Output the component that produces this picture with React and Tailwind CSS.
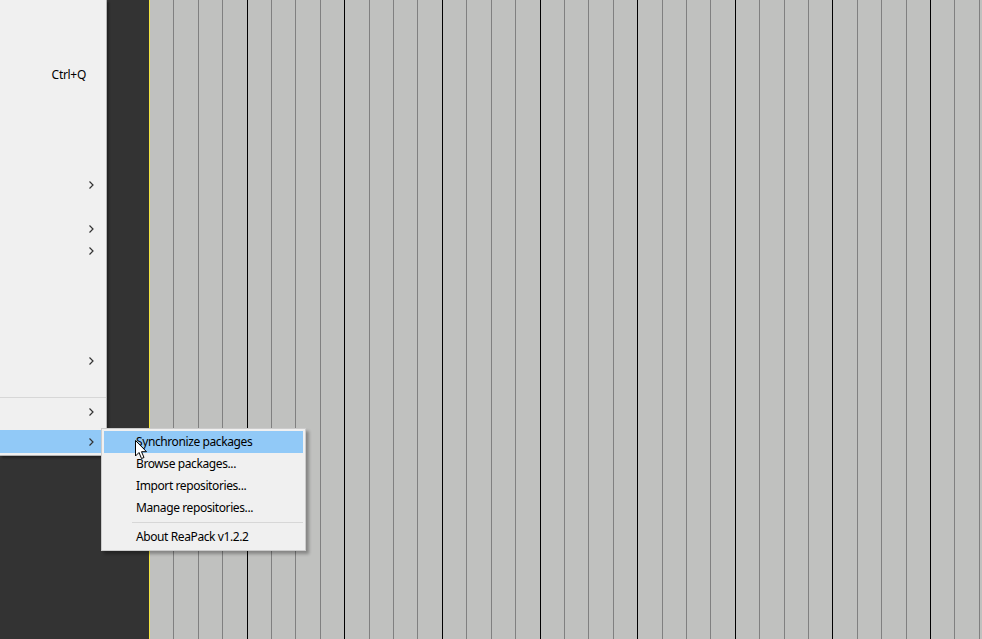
const font = { fontFamily: '"Noto Sans", "Segoe UI", sans-serif' };

function Chevron() {
  return (
    <svg width="5" height="8" viewBox="0 0 5 8" className="text-[#333]">
      <path d="M0.5 0.5 L4 4 L0.5 7.5" fill="none" stroke="currentColor" strokeWidth="1.2" />
    </svg>
  );
}

function MenuRow({ arrow, label, highlight, h = "h-[22px]" }) {
  return (
    <div
      className={`${h} flex items-center justify-end pr-[12px] ${
        highlight ? "bg-[#91c9f7]" : ""
      }`}
    >
      {label ? (
        <span className="text-[12px] tracking-[-0.3px] text-black pr-[8px]">{label}</span>
      ) : null}
      {arrow ? <Chevron /> : null}
    </div>
  );
}

function Separator({ h = "h-[7px]" }) {
  return (
    <div className={`${h} flex items-center`}>
      <div className="h-px w-full bg-[#d7d7d7]" />
    </div>
  );
}

function MainMenu() {
  return (
    <div
      className="absolute left-0 top-0 w-[107px] bg-[#f0f0f0] border-r border-b border-[#b4b4b4] shadow-[2px_2px_2px_rgba(0,0,0,0.35)]"
      style={font}
    >
      <div className="h-[64px]" />
      <MenuRow label="Ctrl+Q" />
      <div className="h-[88px]" />
      <MenuRow arrow />
      <div className="h-[22px]" />
      <MenuRow arrow />
      <MenuRow arrow />
      <div className="h-[88px]" />
      <MenuRow arrow />
      <div className="h-[22px]" />
      <Separator />
      <MenuRow arrow />
      <div className="h-[7px]" />
      <MenuRow arrow highlight h="h-[23px]" />
      <div className="h-[2px]" />
    </div>
  );
}

function SubItem({ children, highlight }) {
  return (
    <div
      className={`h-[22px] flex items-center pl-[32px] text-[12px] tracking-[-0.4px] text-black ${
        highlight ? "bg-[#91c9f7]" : ""
      }`}
    >
      {children}
    </div>
  );
}

function SubMenu() {
  return (
    <div
      className="absolute left-[101px] top-[428px] w-[205px] bg-[#f0f0f0] border border-[#cccccc] p-[2px] shadow-[3px_3px_3px_rgba(0,0,0,0.3)]"
      style={font}
    >
      <SubItem highlight>Synchronize packages</SubItem>
      <SubItem>Browse packages...</SubItem>
      <SubItem>Import repositories...</SubItem>
      <SubItem>Manage repositories...</SubItem>
      <div className="h-[7px] flex items-center pl-[28px]">
        <div className="h-px w-full bg-[#d7d7d7]" />
      </div>
      <SubItem>About ReaPack v1.2.2</SubItem>
    </div>
  );
}

function Cursor() {
  return (
    <svg
      width="13"
      height="20"
      viewBox="0 0 13 20"
      className="absolute left-[135px] top-[440px]"
    >
      <path
        d="M0.5 0.5 L0.5 16 L4 12.5 L6.5 18.5 L9 17.5 L6.5 11.7 L11.5 11.7 Z"
        fill="#fff"
        stroke="#000"
        strokeWidth="1"
      />
    </svg>
  );
}

export default function App() {
  const cols = Array.from({ length: 35 }, (_, i) => i);

  return (
    <div className="relative w-[982px] h-[639px] overflow-hidden bg-[#333333] flex">
      <div className="w-[149px] shrink-0" />

      {/* Arrange grid */}
      <div className="flex-1 flex bg-[#c0c1bf]">
        {cols.map((i) => (
          <div
            key={i}
            className={`w-[24.42px] shrink-0 h-full border-l ${
              i === 0
                ? "border-[#f5e642]"
                : i % 4 === 0
                ? "border-black"
                : "border-[#808080]"
            }`}
          />
        ))}
      </div>

      <MainMenu />
      <SubMenu />
      <Cursor />
    </div>
  );
}
